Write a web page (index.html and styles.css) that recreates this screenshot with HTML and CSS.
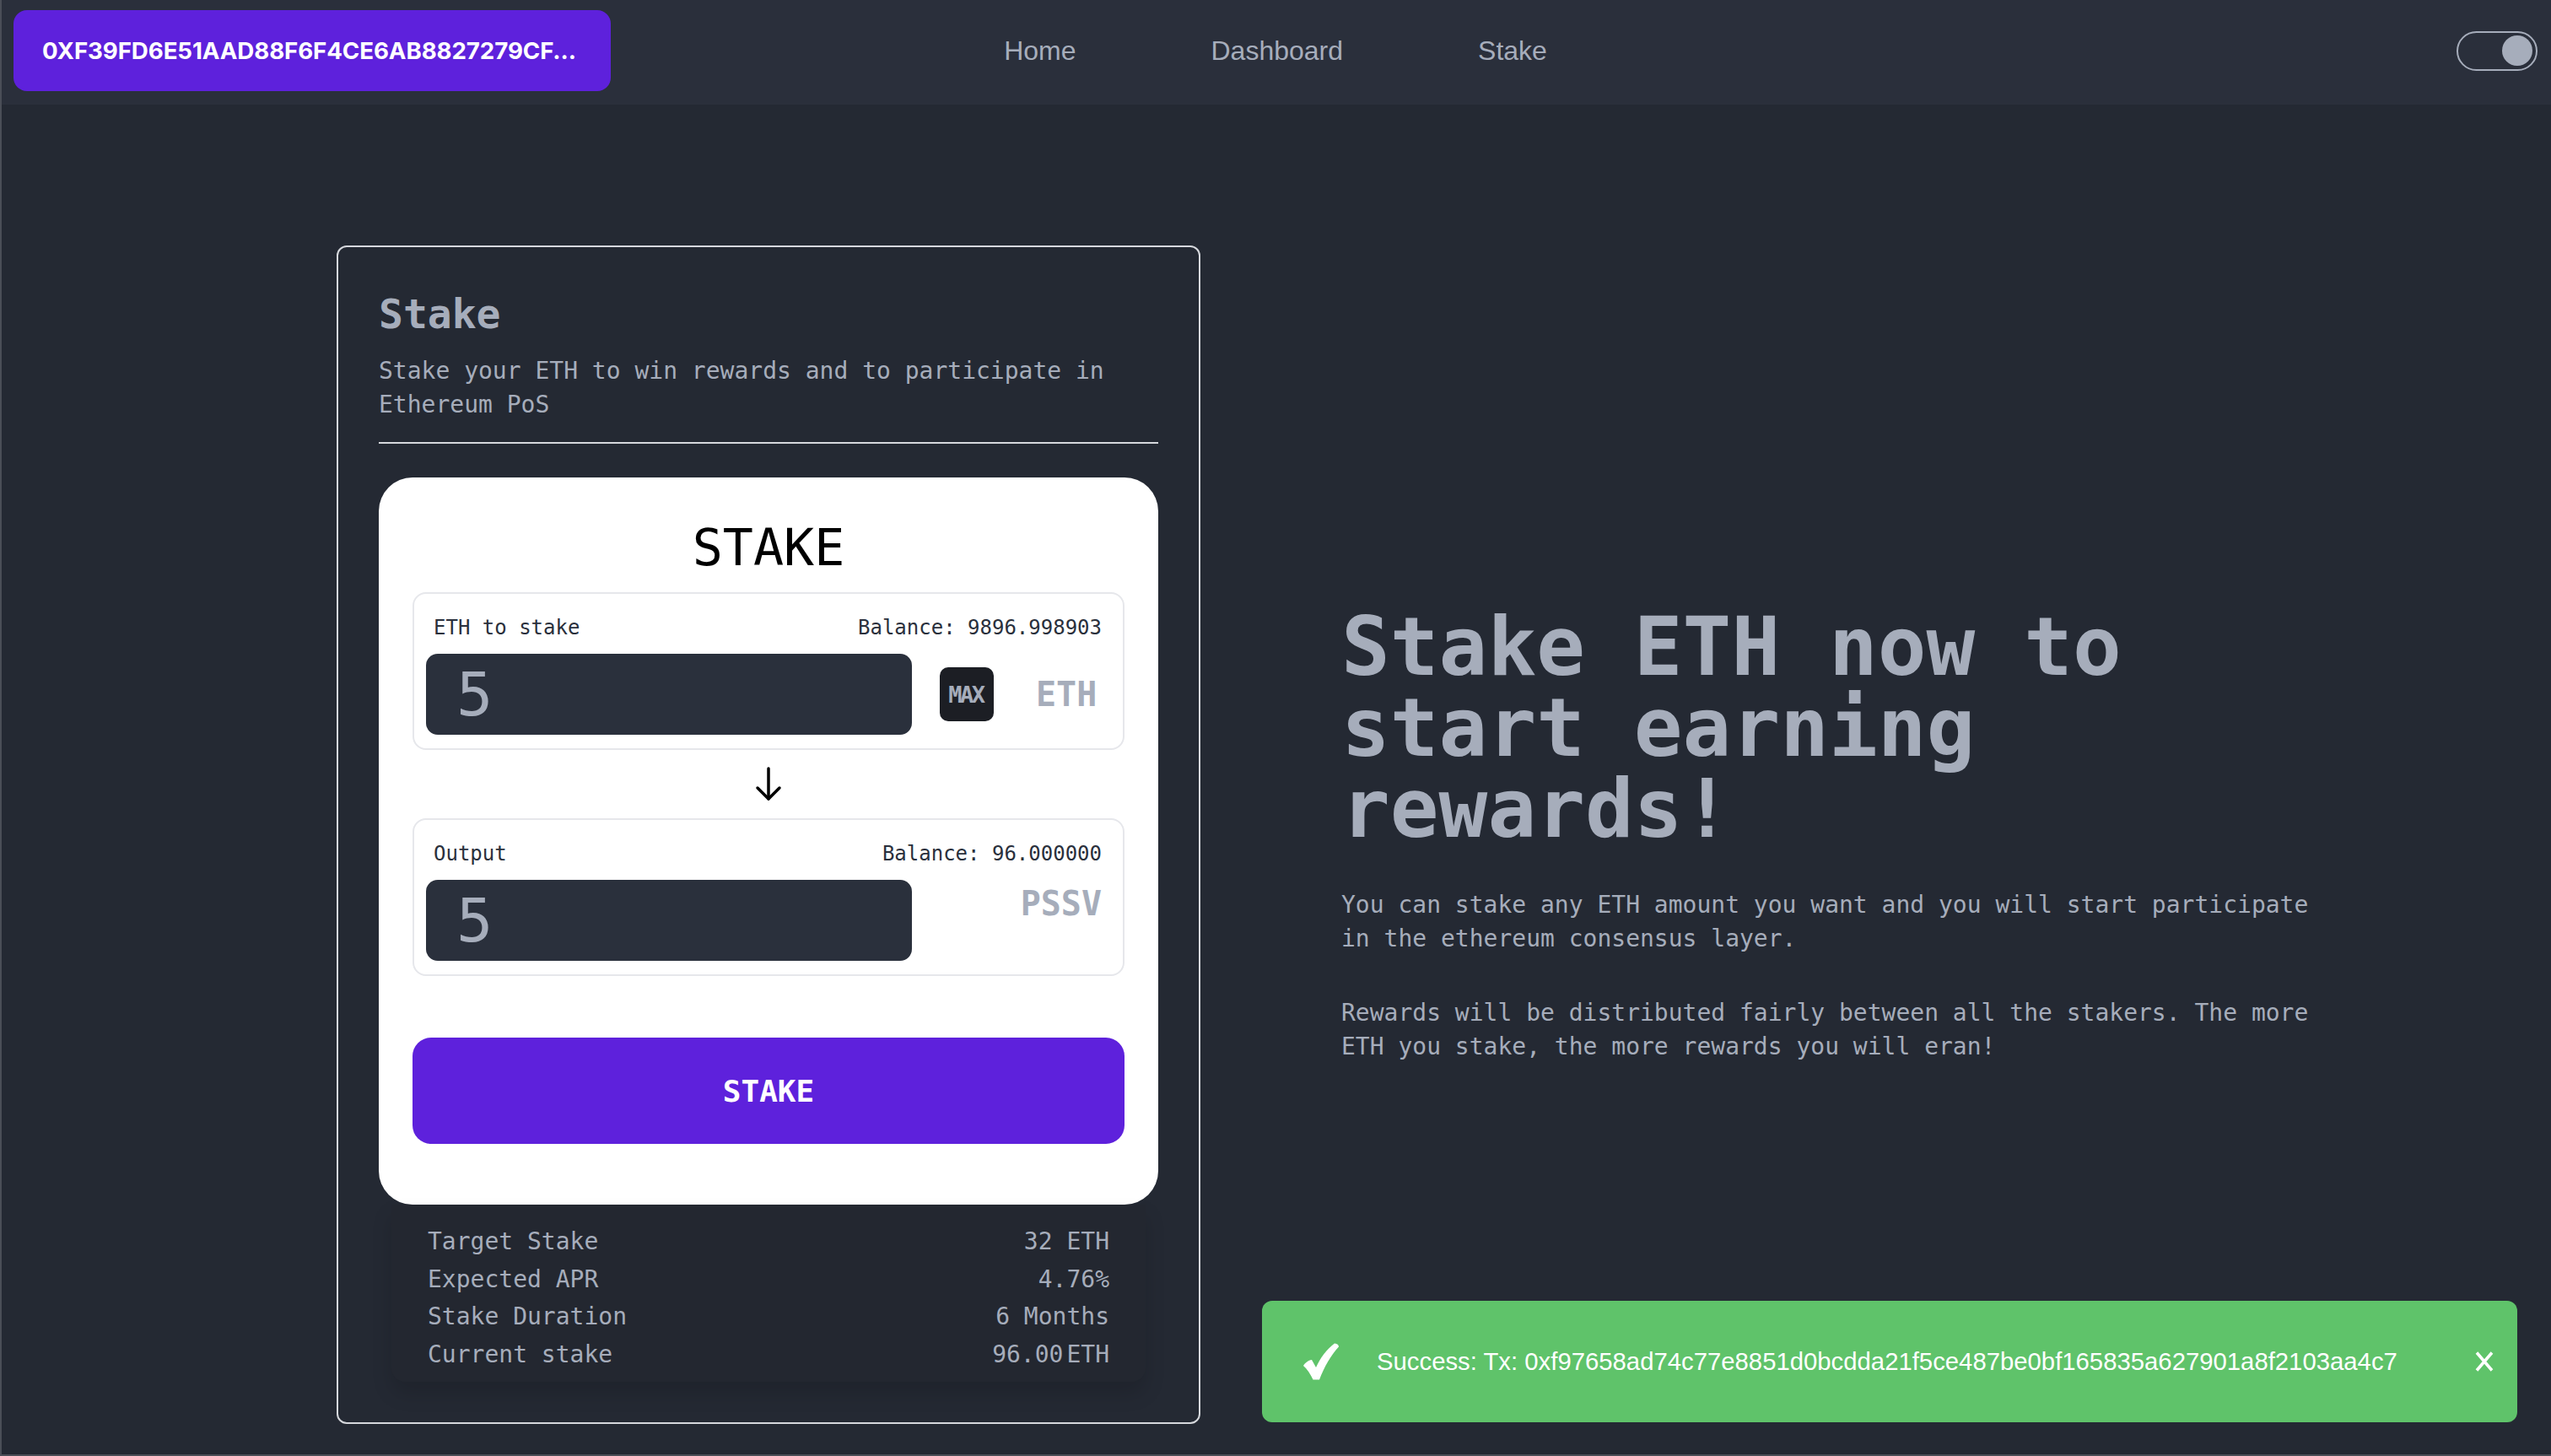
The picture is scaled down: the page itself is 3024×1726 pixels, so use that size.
FILE: index.html
```html
<!DOCTYPE html>
<html lang="en">
<head>
<meta charset="utf-8">
<title>Stake</title>
<link rel="stylesheet" href="styles.css">
</head>
<body>
<div class="app">
  <header class="navbar">
    <div class="nav-start">
      <button class="addr">0XF39FD6E51AAD88F6F4CE6AB8827279CF...</button>
    </div>
    <nav class="nav-links">
      <a href="#">Home</a>
      <a href="#">Dashboard</a>
      <a href="#">Stake</a>
    </nav>
    <div class="nav-end">
      <span class="toggle"><span class="knob"></span></span>
    </div>
  </header>

  <main class="main">
    <section class="card">
      <div class="card-head">
        <h2 class="card-title">Stake</h2>
        <p class="card-sub">Stake your ETH to win rewards and to participate in Ethereum PoS</p>
      </div>

      <div class="panel">
        <h3 class="panel-title">STAKE</h3>

        <div class="field">
          <div class="field-labels"><span>ETH to stake</span><span>Balance: 9896.998903</span></div>
          <div class="field-row">
            <div class="amount">5</div>
            <button class="max">MAX</button>
            <span class="token">ETH</span>
          </div>
        </div>

        <div class="arrow">
          <svg width="36" height="41" viewBox="0 0 36 41" fill="none" stroke="#000" stroke-width="3.5" stroke-linecap="round" stroke-linejoin="round"><path d="M18 2V38"/><path d="M5 25L18 38L31 25"/></svg>
        </div>

        <div class="field">
          <div class="field-labels"><span>Output</span><span>Balance: 96.000000</span></div>
          <div class="field-row">
            <div class="amount">5</div>
            <span class="token token-top">PSSV</span>
          </div>
        </div>

        <button class="stake-btn">STAKE</button>
      </div>

      <div class="stats">
        <div class="stat"><span>Target Stake</span><span>32 ETH</span></div>
        <div class="stat"><span>Expected APR</span><span>4.76%</span></div>
        <div class="stat"><span>Stake Duration</span><span>6 Months</span></div>
        <div class="stat"><span>Current stake</span><span>96.00<span class="unit">ETH</span></span></div>
      </div>
    </section>

    <section class="hero">
      <h1 class="hero-title">Stake ETH now to start earning rewards!</h1>
      <p class="hero-text">You can stake any ETH amount you want and you will start participate in the ethereum consensus layer.</p>
      <p class="hero-text">Rewards will be distributed fairly between all the stakers. The more ETH you stake, the more rewards you will eran!</p>
    </section>
  </main>

  <div class="toast">
    <svg class="toast-check" width="44" height="44" viewBox="0 0 44 44"><path fill="#fff" d="M1 27C3 23.5 7 20.5 11 20L16 29C21 18 29 7 38 0.5C41 0.8 43 2.5 43 4.5C34 14 26 28 20 43.5L12.5 43.5C9.5 37 5.5 31 1 27Z"/></svg>
    <span class="toast-text">Success: Tx: 0xf97658ad74c77e8851d0bcdda21f5ce487be0bf165835a627901a8f2103aa4c7</span>
    <svg class="toast-close" width="24" height="24" viewBox="0 0 24 24" fill="none" stroke="#fff" stroke-width="3.5"><path d="M3 1.5L21 22.5M21 1.5L3 22.5"/></svg>
  </div>
</div>
</body>
</html>
```

FILE: styles.css
```css
* { box-sizing: border-box; }

html, body {
  margin: 0;
  padding: 0;
  background: #242933;
}

body {
  font-family: "DejaVu Sans Mono", monospace;
  color: #a6adbb;
}

.app {
  min-height: 1726px;
  border-left: 2px solid #4a4e57;
  border-bottom: 2px solid #4a4e57;
  background: #242933;
}

/* Navbar */
.navbar {
  height: 124px;
  background: #2a2f3b;
  display: grid;
  grid-template-columns: 1fr auto 1fr;
  align-items: center;
  padding: 12px 16px 16px 14px;
}

.addr {
  height: 96px;
  padding: 0 41px 0 34px;
  border: none;
  border-radius: 16px;
  background: #5e21dc;
  color: #fff;
  font-family: Inter, "Liberation Sans", sans-serif;
  font-weight: 700;
  font-size: 27.7px;
  letter-spacing: -0.1px;
  cursor: pointer;
}

.nav-links {
  display: flex;
  gap: 160px;
}

.nav-links a {
  font-family: "Liberation Sans", Arial, sans-serif;
  font-size: 32px;
  color: #a6adbb;
  text-decoration: none;
}

.nav-end {
  justify-self: end;
  display: flex;
}

.toggle {
  width: 96px;
  height: 47px;
  border: 2px solid #a6adbb;
  border-radius: 24px;
  display: flex;
  align-items: center;
  justify-content: flex-end;
  padding-right: 4px;
}

.knob {
  width: 36px;
  height: 36px;
  border-radius: 50%;
  background: #a6adbb;
}

/* Main */
.main {
  display: flex;
  align-items: center;
  gap: 167px;
  padding: 167px 0 0 397px;
}

.card {
  width: 1024px;
  flex: 0 0 1024px;
  border: 2px solid #d6d8dd;
  border-radius: 12px;
  padding: 51px 48px 48px;
  background: #242933;
}

.card-head {
  padding-bottom: 24px;
  border-bottom: 2px solid #d6d8dd;
}

.card-title {
  margin: 0;
  font-size: 48px;
  font-weight: 700;
  line-height: 56px;
  color: #a6adbb;
}

.card-sub {
  margin: 20px 0 0;
  font-size: 28px;
  line-height: 40px;
  color: #a6adbb;
}

.panel {
  margin-top: 40px;
  background: #fff;
  border-radius: 40px;
  padding: 48px 40px 72px;
}

.panel-title {
  margin: 0 0 18px;
  text-align: center;
  font-size: 60px;
  font-weight: 400;
  line-height: 70px;
  color: #000;
}

.field {
  border: 2px solid #e6e7eb;
  border-radius: 16px;
  padding: 26px 14px 16px;
}

.field-labels {
  display: flex;
  justify-content: space-between;
  padding: 0 11px 0 9px;
  font-size: 24px;
  line-height: 28px;
  color: #2a303c;
}

.field-row {
  display: flex;
  align-items: center;
  margin-top: 17px;
}

.amount {
  flex: 0 0 576px;
  height: 96px;
  background: #2a303c;
  border-radius: 14px;
  padding-left: 36px;
  font-size: 72px;
  line-height: 96px;
  color: #a6adbb;
}

.max {
  width: 64px;
  height: 64px;
  margin-left: 33px;
  border: none;
  border-radius: 10px;
  background: #1c1e24;
  color: #a6adbb;
  font-family: "DejaVu Sans Mono", monospace;
  font-weight: 700;
  font-size: 27px;
  letter-spacing: -2.5px;
  padding: 0 2px 0 0;
}

.token {
  margin-left: 50px;
  font-size: 40px;
  font-weight: 700;
  color: #a6adbb;
  line-height: 47px;
}

.token-top {
  margin-left: auto;
  margin-right: 11px;
  align-self: flex-start;
  margin-top: 5px;
}

.arrow {
  display: flex;
  justify-content: center;
  margin: 20px 0 20px;
  height: 41px;
}

.stake-btn {
  display: block;
  width: 100%;
  height: 126px;
  margin-top: 73px;
  border: none;
  border-radius: 22px;
  background: #5e21dc;
  color: #fff;
  font-family: "DejaVu Sans Mono", monospace;
  font-weight: 700;
  font-size: 36px;
  cursor: pointer;
}

.stats {
  margin: 0 15px;
  padding: 22px 43px 10px 43px;
  background: #232730;
  border-radius: 0 0 16px 16px;
  box-shadow: 0 14px 24px rgba(0, 0, 0, 0.14);
}

.stat {
  display: flex;
  justify-content: space-between;
  font-size: 28px;
  line-height: 44.5px;
  color: #a6adbb;
}

.unit { margin-left: 4px; }

/* Hero */
.hero {
  width: 1160px;
  flex: 0 0 1160px;
}

.hero-title {
  margin: 0 0 46px;
  font-size: 96px;
  font-weight: 700;
  line-height: 96px;
  color: #a6adbb;
}

.hero-text {
  margin: 0 0 48px;
  font-size: 28px;
  line-height: 40px;
  color: #a6adbb;
}

.hero-text:last-child { margin-bottom: 0; }

/* Toast */
.toast {
  position: fixed;
  right: 40px;
  bottom: 40px;
  width: 1488px;
  height: 144px;
  border-radius: 12px;
  background: #5fc36a;
  display: flex;
  align-items: center;
  padding: 0 27px 0 48px;
  color: #fff;
}

.toast-check { flex: 0 0 44px; }

.toast-text {
  margin-left: 44px;
  flex: 1;
  font-family: "Liberation Sans", Arial, sans-serif;
  font-size: 29.3px;
}

.toast-close { flex: 0 0 24px; }
```
